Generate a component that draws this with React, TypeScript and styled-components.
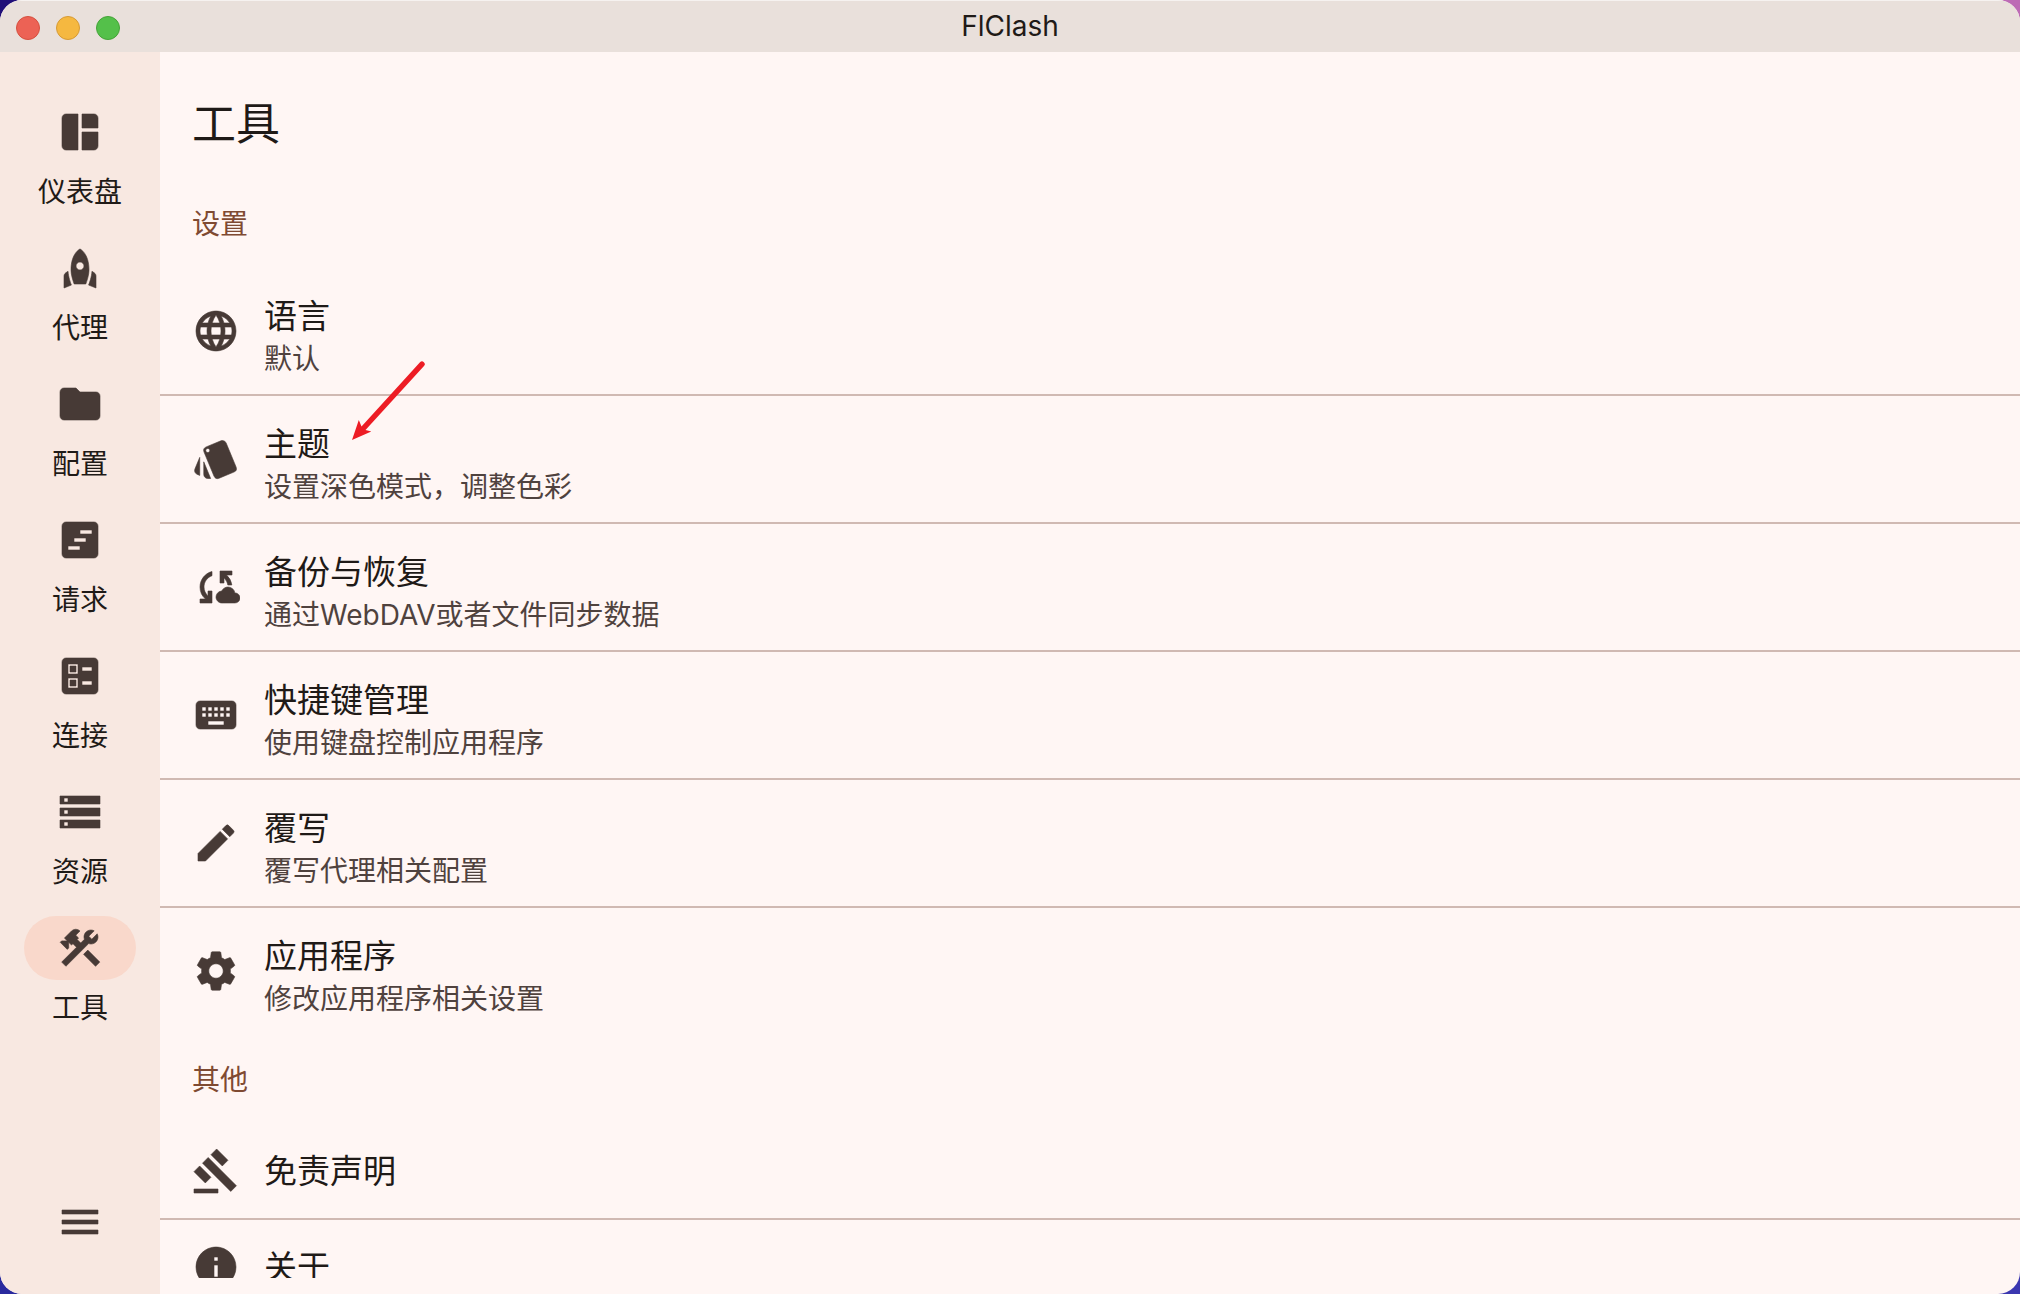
import React from 'react';
import styled, { createGlobalStyle } from 'styled-components';
import type { IconType } from 'react-icons';
import {
  MdBallot,
  MdCloudSync,
  MdConstruction,
  MdEdit,
  MdFolder,
  MdGavel,
  MdInfo,
  MdKeyboard,
  MdLanguage,
  MdMenu,
  MdRocket,
  MdSettings,
  MdSpaceDashboard,
  MdStorage,
  MdStyle,
  MdViewTimeline,
} from 'react-icons/md';

const color = {
  titleBar: '#e9e0db',
  rail: '#f8e8e1',
  surface: '#fff6f4',
  indicator: '#f9d8cb',
  icon: '#473a36',
  text: '#1f1a17',
  muted: '#4f423e',
  accent: '#7f4a32',
  divider: '#d0b9b2',
  marker: '#ed1c24',
};

const GlobalStyle = createGlobalStyle`
  * { box-sizing: border-box; }
  body {
    margin: 0;
    background:
      linear-gradient(90deg, #200f78 50%, #bd6bb5 50%) top / 100% 50% no-repeat,
      linear-gradient(90deg, #2a2a9e 50%, #3b37b0 50%) bottom / 100% 50% no-repeat;
    font-family: Inter, 'Noto Sans CJK SC', sans-serif;
    color: ${color.text};
  }
  button {
    margin: 0;
    padding: 0;
    border: 0;
    background: none;
    font: inherit;
    color: inherit;
    cursor: pointer;
  }
`;

const Window = styled.div`
  display: flex;
  flex-direction: column;
  height: 100vh;
  overflow: hidden;
  border-radius: 22px;
  background: ${color.surface};
`;

const TitleBar = styled.header`
  display: grid;
  grid-template-columns: 1fr auto 1fr;
  align-items: center;
  flex: none;
  height: 52px;
  padding: 0 16px;
  background: ${color.titleBar};
  box-shadow: inset 0 1px #f6f2f0;
`;

const WindowControls = styled.div`
  display: flex;
  gap: 16px;
  padding-top: 4px;
`;

const WindowControl = styled.button<{ $fill: string; $edge: string }>`
  width: 24px;
  height: 24px;
  border: 1px solid ${(p) => p.$edge};
  border-radius: 50%;
  background: ${(p) => p.$fill};
`;

const WindowTitle = styled.span`
  font-size: 28px;
  line-height: 52px;
`;

const Body = styled.div`
  display: flex;
  flex: 1;
  min-height: 0;
`;

const Rail = styled.nav`
  display: flex;
  flex-direction: column;
  justify-content: space-between;
  align-items: center;
  flex: none;
  width: 160px;
  padding: 48px 0 32px;
  background: ${color.rail};
`;

const RailList = styled.ul`
  display: flex;
  flex-direction: column;
  gap: 24px;
  margin: 0;
  padding: 0;
  list-style: none;
`;

const RailButton = styled.button`
  display: flex;
  flex-direction: column;
  align-items: center;
  gap: 8px;
`;

const Indicator = styled.span<{ $active: boolean }>`
  display: flex;
  align-items: center;
  justify-content: center;
  width: 112px;
  height: 64px;
  border-radius: 32px;
  background: ${(p) => (p.$active ? color.indicator : 'transparent')};
  color: ${color.icon};
`;

const RailLabel = styled.span`
  font-size: 28px;
  line-height: 40px;
`;

const MenuButton = styled.button`
  display: flex;
  align-items: center;
  justify-content: center;
  width: 80px;
  height: 80px;
  color: ${color.icon};
`;

const Main = styled.main`
  display: flex;
  flex-direction: column;
  flex: 1;
  min-width: 0;
  padding-bottom: 16px;
`;

const PageTitle = styled.h1`
  flex: none;
  margin: 0;
  padding: 16px 32px 0;
  font-size: 44px;
  font-weight: 400;
  line-height: 112px;
`;

const Scroller = styled.div`
  flex: 1;
  min-height: 0;
  overflow-y: auto;
  scrollbar-width: none;
`;

const SectionTitle = styled.h2`
  margin: 0;
  padding: 0 32px;
  font-size: 28px;
  font-weight: 400;
  line-height: 88px;
  color: ${color.accent};
`;

const SettingList = styled.ul`
  margin: 0;
  padding: 0;
  list-style: none;
`;

const SettingItem = styled.li`
  position: relative;
  border-bottom: 2px solid ${color.divider};

  &:last-child {
    border-color: transparent;
  }
`;

const SettingButton = styled.button<{ $tall: boolean }>`
  display: flex;
  align-items: center;
  gap: 24px;
  width: 100%;
  height: ${(p) => (p.$tall ? '126px' : '94px')};
  padding: 0 32px;
  text-align: left;
`;

const SettingIcon = styled.span`
  display: flex;
  flex: none;
  color: ${color.icon};
`;

const SettingText = styled.span<{ $tall: boolean }>`
  display: flex;
  flex-direction: column;
  padding-top: ${(p) => (p.$tall ? '8px' : '0')};
`;

const SettingName = styled.span`
  font-size: 33px;
  line-height: 48px;
`;

const SettingHint = styled.span`
  font-size: 28px;
  line-height: 38px;
  color: ${color.muted};
`;

const GlyphBox = styled.span`
  display: flex;

  /* The icon set ships an unfilled bounding square; keep it invisible. */
  [fill='none'] {
    stroke: none;
  }
`;

const Marker = styled.svg`
  position: absolute;
  top: -36px;
  left: 190px;
  pointer-events: none;
`;

type Setting = { icon: IconType; name: string; hint?: string; marked?: boolean };

const railItems: { icon: IconType; label: string }[] = [
  { icon: MdSpaceDashboard, label: '仪表盘' },
  { icon: MdRocket, label: '代理' },
  { icon: MdFolder, label: '配置' },
  { icon: MdViewTimeline, label: '请求' },
  { icon: MdBallot, label: '连接' },
  { icon: MdStorage, label: '资源' },
  { icon: MdConstruction, label: '工具' },
];

const sections: { title: string; items: Setting[] }[] = [
  {
    title: '设置',
    items: [
      { icon: MdLanguage, name: '语言', hint: '默认' },
      { icon: MdStyle, name: '主题', hint: '设置深色模式，调整色彩', marked: true },
      { icon: MdCloudSync, name: '备份与恢复', hint: '通过WebDAV或者文件同步数据' },
      { icon: MdKeyboard, name: '快捷键管理', hint: '使用键盘控制应用程序' },
      { icon: MdEdit, name: '覆写', hint: '覆写代理相关配置' },
      { icon: MdSettings, name: '应用程序', hint: '修改应用程序相关设置' },
    ],
  },
  {
    title: '其他',
    items: [
      { icon: MdGavel, name: '免责声明' },
      { icon: MdInfo, name: '关于' },
    ],
  },
];

function Glyph({ icon: Icon }: { icon: IconType }) {
  return (
    <GlyphBox>
      <Icon size={48} strokeWidth={0.3} aria-hidden />
    </GlyphBox>
  );
}

function MarkerArrow() {
  return (
    <Marker width="80" height="84" viewBox="0 0 80 84" fill={color.marker} aria-hidden>
      <path d="M2 80 8.800 60 11.500 66.500 70 2.300A2.700 2.700 0 0 1 74 6L15.500 70 21.300 71.500Z" />
    </Marker>
  );
}

function SettingRow({ item }: { item: Setting }) {
  const tall = Boolean(item.hint);
  return (
    <SettingItem>
      <SettingButton type="button" $tall={tall}>
        <SettingIcon>
          <Glyph icon={item.icon} />
        </SettingIcon>
        <SettingText $tall={tall}>
          <SettingName>{item.name}</SettingName>
          {item.hint && <SettingHint>{item.hint}</SettingHint>}
        </SettingText>
      </SettingButton>
      {item.marked && <MarkerArrow />}
    </SettingItem>
  );
}

export default function App() {
  return (
    <>
      <GlobalStyle />
      <Window lang="zh-CN">
        <TitleBar>
          <WindowControls>
            <WindowControl type="button" aria-label="关闭" $fill="#ec6255" $edge="#d5503f" />
            <WindowControl type="button" aria-label="最小化" $fill="#f5b840" $edge="#d69a35" />
            <WindowControl type="button" aria-label="缩放" $fill="#54c04a" $edge="#45a338" />
          </WindowControls>
          <WindowTitle>FlClash</WindowTitle>
        </TitleBar>
        <Body>
          <Rail>
            <RailList>
              {railItems.map((item) => {
                const active = item.label === '工具';
                return (
                  <li key={item.label}>
                    <RailButton type="button" aria-current={active ? 'page' : undefined}>
                      <Indicator $active={active}>
                        <Glyph icon={item.icon} />
                      </Indicator>
                      <RailLabel>{item.label}</RailLabel>
                    </RailButton>
                  </li>
                );
              })}
            </RailList>
            <MenuButton type="button" aria-label="菜单">
              <Glyph icon={MdMenu} />
            </MenuButton>
          </Rail>
          <Main>
            <PageTitle>工具</PageTitle>
            <Scroller>
              {sections.map((section) => (
                <section key={section.title}>
                  <SectionTitle>{section.title}</SectionTitle>
                  <SettingList>
                    {section.items.map((item) => (
                      <SettingRow key={item.name} item={item} />
                    ))}
                  </SettingList>
                </section>
              ))}
            </Scroller>
          </Main>
        </Body>
      </Window>
    </>
  );
}
